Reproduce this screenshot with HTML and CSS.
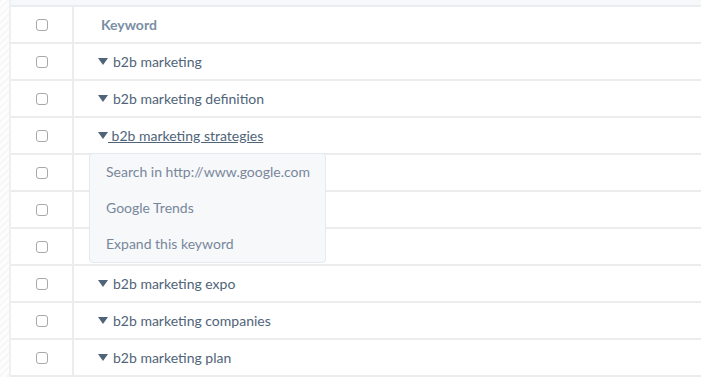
FILE: index.html
```html
<!DOCTYPE html>
<html lang="en">
<head>
    <meta charset="UTF-8">
    <title>Keywords</title>
    <link rel="stylesheet" href="styles.css">
</head>
<body>
    <div class="strip"></div>
    <div class="table">
        <div class="top-band"></div>
        <div class="row head">
            <div class="cell check"><span class="box"></span></div>
            <div class="cell kw">Keyword</div>
        </div>
        <div class="row">
            <div class="cell check"><span class="box"></span></div>
            <div class="cell kw"><span class="tri"></span>b2b marketing</div>
        </div>
        <div class="row">
            <div class="cell check"><span class="box"></span></div>
            <div class="cell kw"><span class="tri"></span>b2b marketing definition</div>
        </div>
        <div class="row open">
            <div class="cell check"><span class="box"></span></div>
            <div class="cell kw"><span class="tri"></span><a class="link">&nbsp;b2b marketing strategies</a></div>
            <ul class="menu">
                <li>Search in http://www.google.com</li>
                <li>Google Trends</li>
                <li>Expand this keyword</li>
            </ul>
        </div>
        <div class="row">
            <div class="cell check"><span class="box"></span></div>
            <div class="cell kw"></div>
        </div>
        <div class="row">
            <div class="cell check"><span class="box"></span></div>
            <div class="cell kw"></div>
        </div>
        <div class="row">
            <div class="cell check"><span class="box"></span></div>
            <div class="cell kw"></div>
        </div>
        <div class="row">
            <div class="cell check"><span class="box"></span></div>
            <div class="cell kw"><span class="tri"></span>b2b marketing expo</div>
        </div>
        <div class="row">
            <div class="cell check"><span class="box"></span></div>
            <div class="cell kw"><span class="tri"></span>b2b marketing companies</div>
        </div>
        <div class="row">
            <div class="cell check"><span class="box"></span></div>
            <div class="cell kw"><span class="tri"></span>b2b marketing plan</div>
        </div>
    </div>
</body>
</html>
```

FILE: styles.css
```css
* {
    margin: 0;
    padding: 0;
    box-sizing: border-box;
}
body {
    display: flex;
    height: 377px;
    overflow: hidden;
    background: #fff;
    font-family: Lato, "Open Sans", sans-serif;
    font-size: 14px;
}
.strip {
    width: 9px;
    flex: none;
    background: repeating-linear-gradient(135deg, #f7f7f7 0 2px, #fdfdfd 2px 5px);
}
.table {
    flex: 1;
    border-left: 2px solid #eef0f3;
}
.top-band {
    height: 7px;
    background: #f6f8fa;
    border-bottom: 2px solid #e9edf2;
}
.row {
    position: relative;
    display: grid;
    grid-template-columns: 63px 1fr;
    height: 37px;
    border-bottom: 2px solid #ececec;
}
.cell {
    display: flex;
    align-items: center;
}
.check {
    justify-content: center;
    border-right: 2px solid #ececec;
}
.box {
    width: 12px;
    height: 12px;
    border: 1px solid #a9a9a9;
    border-radius: 3px;
    background: #fff;
}
.kw {
    padding-left: 24px;
    color: #4f6479;
}
.head .kw {
    padding-left: 27px;
    font-weight: bold;
    color: #7a8ea5;
}
.tri {
    width: 0;
    height: 0;
    margin-right: 5px;
    border-left: 5px solid transparent;
    border-right: 5px solid transparent;
    border-top: 7px solid #4f6479;
}
.link {
    color: #4f6479;
    text-decoration: underline;
    margin-left: -5px;
}
.menu {
    list-style: none;
    position: absolute;
    left: 78px;
    top: 35px;
    width: 237px;
    background: #f7f8fa;
    border: 1px solid #e6e9ed;
    border-radius: 4px;
    z-index: 2;
}
.menu li {
    height: 36px;
    line-height: 36px;
    padding-left: 16px;
    color: #78879a;
}
```
